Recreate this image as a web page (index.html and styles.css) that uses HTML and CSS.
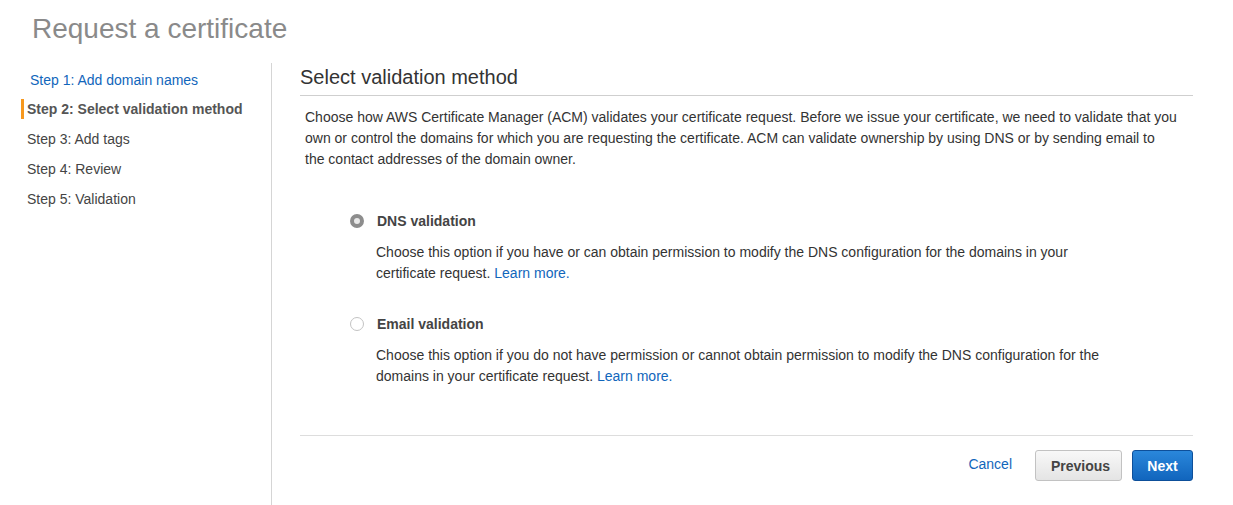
FILE: index.html
```html
<!DOCTYPE html>
<html>
<head>
<meta charset="utf-8">
<link rel="stylesheet" href="styles.css">
</head>
<body>
<h1 class="page-title">Request a certificate</h1>
<div class="wizard">
  <nav class="steps">
    <a class="step step-link" href="#">Step 1: Add domain names</a>
    <div class="step step-active">Step 2: Select validation method</div>
    <div class="step">Step 3: Add tags</div>
    <div class="step">Step 4: Review</div>
    <div class="step">Step 5: Validation</div>
  </nav>
  <main class="content">
    <h2 class="section-title">Select validation method</h2>
    <p class="intro">Choose how AWS Certificate Manager (ACM) validates your certificate request. Before we issue your certificate, we need to validate that you own or control the domains for which you are requesting the certificate. ACM can validate ownership by using DNS or by sending email to<br>the contact addresses of the domain owner.</p>
    <div class="options">
      <div class="option">
        <div class="option-head">
          <span class="radio radio-checked"></span>
          <span class="option-label">DNS validation</span>
        </div>
        <p class="option-desc">Choose this option if you have or can obtain permission to modify the DNS configuration for the domains in your certificate request. <a href="#">Learn more.</a></p>
      </div>
      <div class="option">
        <div class="option-head">
          <span class="radio"></span>
          <span class="option-label">Email validation</span>
        </div>
        <p class="option-desc">Choose this option if you do not have permission or cannot obtain permission to modify the DNS configuration for the domains in your certificate request. <a href="#">Learn more.</a></p>
      </div>
    </div>
    <div class="actions">
      <a class="cancel" href="#">Cancel</a>
      <button class="btn btn-secondary">Previous</button>
      <button class="btn btn-primary">Next</button>
    </div>
  </main>
</div>
</body>
</html>
```
FILE: styles.css
```css
html, body {
  margin: 0;
  padding: 0;
  background: #fff;
}
body {
  font-family: "Liberation Sans", Arial, Helvetica, sans-serif;
  font-size: 14px;
  color: #333;
  width: 1233px;
  height: 505px;
  overflow: hidden;
}
a {
  color: #1166bb;
  text-decoration: none;
}
.page-title {
  margin: 0;
  padding: 12px 0 0 32px;
  height: 52px;
  box-sizing: border-box;
  font-size: 28px;
  font-weight: normal;
  color: #8a8a8a;
  line-height: 34px;
}
.wizard {
  display: flex;
  margin-top: 11px;
}
.steps {
  width: 271px;
  border-right: 1px solid #d5d5d5;
  min-height: 442px;
  display: flex;
  flex-direction: column;
  padding-top: 8px;
  box-sizing: content-box;
}
.step {
  display: block;
  height: 30px;
  line-height: 18px;
  padding-left: 27px;
  color: #444;
}
.step-link {
  padding-left: 30px;
  color: #1166bb;
  height: 29px;
}
.step-active {
  font-weight: bold;
  color: #555;
  position: relative;
}
.step-active::before {
  content: "";
  position: absolute;
  left: 21px;
  top: -1px;
  width: 3px;
  height: 20px;
  background: #f7981d;
}
.content {
  width: 893px;
  margin-left: 28px;
}
.section-title {
  margin: 0;
  font-size: 20px;
  font-weight: normal;
  color: #333;
  line-height: 28px;
  padding-bottom: 4px;
  border-bottom: 1px solid #cfcfcf;
}
.intro {
  margin: 11px 0 0 0;
  padding: 0 5px;
  line-height: 21px;
}
.options {
  margin-top: 41px;
  padding-left: 50px;
  padding-bottom: 48px;
  border-bottom: 1px solid #ddd;
}
.option + .option {
  margin-top: 30px;
}
.option-head {
  display: flex;
  align-items: center;
  height: 20px;
}
.radio {
  width: 12px;
  height: 12px;
  border: 1px solid #c3c3c3;
  border-radius: 50%;
  margin-right: 13px;
  background: #fff;
  box-sizing: content-box;
}
.radio-checked {
  width: 6px;
  height: 6px;
  border: 4px solid #8d8d8d;
  background: #e9e9e9;
}
.option-label {
  font-weight: bold;
  color: #444;
}
.option-desc {
  margin: 11px 0 0 26px;
  line-height: 21px;
  width: 740px;
}
.actions {
  display: flex;
  justify-content: flex-end;
  align-items: center;
  margin-top: 14px;
}
.cancel {
  margin-right: 23px;
  margin-top: -3px;
}
.btn {
  height: 31px;
  border-radius: 3px;
  font-family: "Liberation Sans", Arial, sans-serif;
  font-size: 14px;
  font-weight: bold;
  padding: 0 15px;
  cursor: pointer;
}
.btn-secondary {
  background: linear-gradient(#f8f8f8, #e4e4e4);
  border: 1px solid #c2c2c2;
  color: #444;
  width: 87px;
}
.btn-primary {
  margin-left: 10px;
  background: linear-gradient(#2a87db, #1165bd);
  border: 1px solid #0d4f9a;
  color: #fff;
  width: 61px;
  padding: 0;
}
```
